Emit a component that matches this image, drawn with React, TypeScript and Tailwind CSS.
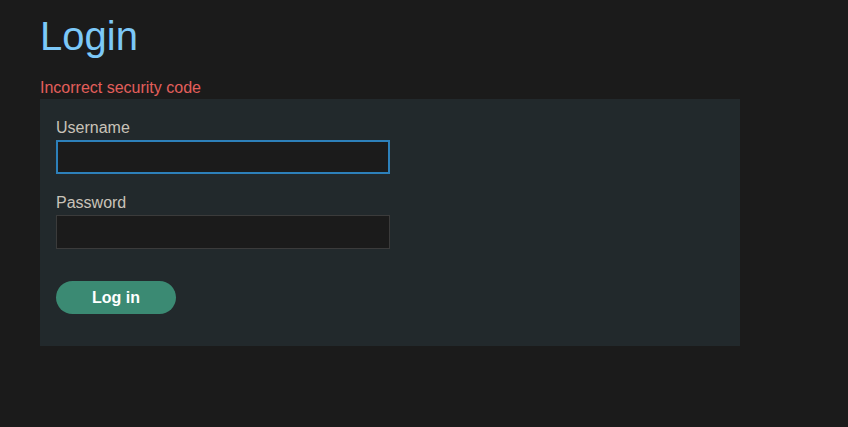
export default function App() {
  return (
    <div className="min-h-[427px] bg-[#1b1b1b] px-10 pt-[11px] font-['Liberation_Sans',Arial,sans-serif]">
      <h1 className="text-[40px] leading-[50px] text-[#7cc8f8]">Login</h1>
      <p className="mt-[16px] text-[16px] leading-[22px] text-[#e35f5b]">Incorrect security code</p>
      <form className="w-[700px] bg-[#22292c] px-4 pt-[17px] pb-8">
        <label className="block text-[16px] leading-[24px] text-[#c9c3b9]">Username</label>
        <input
          type="text"
          className="block h-[34px] w-[334px] border-2 border-[#2d80ba] bg-[#1b1b1b] outline-none"
        />
        <label className="mt-[17px] block text-[16px] leading-[24px] text-[#c9c3b9]">Password</label>
        <input
          type="password"
          className="block h-[34px] w-[334px] border border-[#3b3b3b] bg-[#1b1b1b] outline-none"
        />
        <button
          type="button"
          className="mt-8 h-[33px] w-[120px] rounded-full bg-[#3b8a73] text-[16px] font-bold text-white"
        >
          Log in
        </button>
      </form>
    </div>
  );
}
